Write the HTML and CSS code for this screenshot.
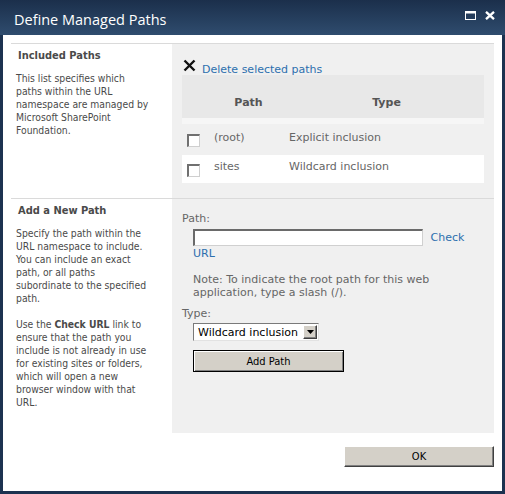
FILE: index.html
```html
<!DOCTYPE html>
<html lang="en">
<head>
<meta charset="utf-8">
<title>Define Managed Paths</title>
<link rel="stylesheet" href="styles.css">
</head>
<body>
<div class="dialog">
  <div class="titlebar">
    <span class="title">Define Managed Paths</span>
    <div class="win-controls">
      <svg class="win-btn" width="11" height="9" viewBox="0 0 11 9" aria-label="Maximize">
        <rect x="0.5" y="0.5" width="10" height="8" fill="none" stroke="#fff"/>
        <rect x="0" y="0" width="11" height="2.5" fill="#fff"/>
      </svg>
      <svg class="win-btn" width="10" height="9" viewBox="0 0 10 9" aria-label="Close">
        <path d="M1 0.8 L9 8.2 M9 0.8 L1 8.2" stroke="#fff" stroke-width="2.3"/>
      </svg>
    </div>
  </div>

  <div class="content">
    <div class="section">
      <div class="desc">
        <h3 class="desc-title">Included Paths</h3>
        <p>This list specifies which paths within the URL namespace are managed by Microsoft SharePoint Foundation.</p>
      </div>
      <div class="control">
        <div class="delete-row">
          <svg class="delete-icon" width="13" height="13" viewBox="0 0 13 13">
            <path d="M1.5 1.5 L11.5 11.5 M11.5 1.5 L1.5 11.5" stroke="#111" stroke-width="2.4"/>
          </svg>
          <a href="#" class="link">Delete selected paths</a>
        </div>
        <table class="paths">
          <colgroup>
            <col class="col-cb">
            <col class="col-path">
            <col class="col-type">
          </colgroup>
          <thead>
            <tr><th></th><th>Path</th><th>Type</th></tr>
          </thead>
          <tbody>
            <tr class="row-odd">
              <td class="cell-cb"><input type="checkbox" class="cb"></td>
              <td>(root)</td>
              <td>Explicit inclusion</td>
            </tr>
            <tr class="row-even">
              <td class="cell-cb"><input type="checkbox" class="cb"></td>
              <td>sites</td>
              <td>Wildcard inclusion</td>
            </tr>
          </tbody>
        </table>
      </div>
    </div>

    <div class="section">
      <div class="desc">
        <h3 class="desc-title">Add a New Path</h3>
        <p>Specify the path within the URL namespace to include. You can include an exact path, or all paths subordinate to the specified path.</p>
        <p class="para">Use the <b>Check URL</b> link to ensure that the path you include is not already in use for existing sites or folders, which will open a new browser window with that URL.</p>
      </div>
      <div class="control control-form">
        <label class="label">Path:</label>
        <div class="field">
          <input type="text" class="text-input"> <a href="#" class="link">Check URL</a>
        </div>
        <p class="note">Note: To indicate the root path for this web application, type a slash (/).</p>
        <label class="label label-type">Type:</label>
        <div class="field">
          <div class="select">
            <span class="select-value">Wildcard inclusion</span>
            <span class="select-arrow">
              <svg width="7" height="4" viewBox="0 0 7 4"><path d="M0 0 H7 L3.5 4 Z" fill="#000"/></svg>
            </span>
          </div>
        </div>
        <div class="field">
          <button type="button" class="btn btn-add">Add Path</button>
        </div>
      </div>
    </div>

    <div class="footer">
      <button type="button" class="btn btn-ok">OK</button>
    </div>
  </div>
</div>
</body>
</html>
```

FILE: styles.css
```css
* {
  box-sizing: border-box;
}

html,
body {
  margin: 0;
  padding: 0;
}

body {
  width: 505px;
  height: 494px;
  overflow: hidden;
  background: #1c3250;
}

/* window frame */
.dialog {
  width: 505px;
  height: 494px;
  padding: 0 3px 3px;
  background: #1c3250;
  display: flex;
  flex-direction: column;
}

.titlebar {
  height: 35px;
  margin: 0 -3px;
  padding: 0 10px 0 14px;
  background: linear-gradient(#1b2f4b, #2f4c6e);
  display: flex;
  align-items: center;
  justify-content: space-between;
  flex: none;
}

.title {
  color: #fff;
  font-family: "Open Sans", "Noto Sans", sans-serif;
  font-size: 14.5px;
  padding-top: 3px;
}

.win-controls {
  align-self: flex-start;
  margin-top: 11px;
  display: flex;
  gap: 9px;
}

.win-btn {
  display: block;
}

/* dialog body */
.content {
  flex: 1;
  background: #fff;
  padding: 8px 8px 0;
  display: flex;
  flex-direction: column;
}

.section {
  display: grid;
  grid-template-columns: 161px 1fr;
  border-top: 1px solid #dadada;
}

.desc {
  padding: 5px 19.5px 24px 5px;
  color: #4a4a4a;
  font-family: "DejaVu Sans Condensed", "DejaVu Sans", sans-serif;
  font-stretch: condensed;
  font-size: 10.3px;
  line-height: 13px;
}

.desc-title {
  margin: 0;
  padding-left: 2px;
  font-size: 11px;
  font-weight: bold;
  line-height: 13px;
}

.desc p {
  margin: 10px 0 0;
}

.desc p.para {
  margin-top: 13px;
}

.desc b {
  font-weight: bold;
}

.control {
  background: #f0f0f0;
  padding: 14px 10px 15px;
  font-family: "DejaVu Sans", Verdana, sans-serif;
  font-size: 11px;
  line-height: 13px;
  color: #666;
}

.link {
  color: #2d6fae;
  text-decoration: none;
}

.delete-row {
  height: 17px;
  display: flex;
  align-items: flex-start;
  gap: 6px;
  padding-left: 1px;
}

.delete-icon {
  display: block;
  margin-top: 1px;
}

.delete-row .link {
  margin-top: 5px;
}

/* path list */
.paths {
  width: 302px;
  table-layout: fixed;
  border-collapse: separate;
  border-spacing: 0;
}

.col-cb {
  width: 26px;
}

.col-path {
  width: 75px;
}

.paths th {
  background: #e8e8e8;
  border-bottom: 6px solid #f6f6f6;
  color: #555;
  font-weight: bold;
  text-align: center;
  padding: 21px 0 9px 6px;
  line-height: 13px;
}

.paths td {
  padding: 7px 0 11px 6px;
  vertical-align: top;
  white-space: nowrap;
}

.paths .row-even td {
  background: #fff;
  padding-top: 5px;
  padding-bottom: 10px;
}

.paths td.cell-cb {
  padding: 0 0 0 5px;
  vertical-align: middle;
}

.cb {
  appearance: none;
  -webkit-appearance: none;
  display: block;
  margin: 2px 0 0;
  width: 13px;
  height: 13px;
  background: #fff;
  border-style: solid;
  border-width: 2px 1px 1px 2px;
  border-color: #707070 #cfcfcf #cfcfcf #707070;
}

/* add form */
.control-form {
  padding-top: 13px;
}

.label {
  display: block;
  color: #666;
}

.field {
  margin-left: 11px;
  margin-right: 12px;
}

.field:first-of-type {
  margin-top: 4px;
  line-height: 15px;
}

.text-input {
  appearance: none;
  -webkit-appearance: none;
  width: 230px;
  height: 17px;
  margin: 0 4px 0 0;
  padding: 0;
  vertical-align: middle;
  background: #fff;
  border-style: solid;
  border-width: 2px 1px 1px 2px;
  border-color: #6a6a6a #d0d0d0 #d0d0d0 #6a6a6a;
}

.note {
  margin: 12px 0 0 11px;
  color: #666;
}

.label-type {
  margin-top: 8px;
}

.label-type + .field {
  margin-top: 3px;
}

.select {
  width: 126px;
  height: 18px;
  display: flex;
  align-items: center;
  justify-content: space-between;
  background: #fff;
  border-style: solid;
  border-width: 1px;
  border-color: #7a7a7a #e2e2e2 #e2e2e2 #7a7a7a;
  padding: 0 1px 0 4px;
}

.select-value {
  color: #000;
  font-family: "DejaVu Sans", sans-serif;
  font-size: 11px;
}

.select-arrow {
  width: 14px;
  height: 14px;
  background: #d4d0c8;
  border-style: solid;
  border-width: 1px;
  border-color: #fff #404040 #404040 #fff;
  box-shadow: inset -1px -1px #808080;
  display: flex;
  align-items: center;
  justify-content: center;
}

.select-arrow svg {
  display: block;
}

.btn {
  font-family: "DejaVu Sans Condensed", "DejaVu Sans", sans-serif;
  font-stretch: condensed;
  font-size: 11px;
  color: #000;
  background: #d4d0c8;
  padding: 0;
  cursor: default;
}

.btn-add {
  display: block;
  margin-top: 9px;
  width: 151px;
  height: 22px;
  border: 1px solid #000;
  box-shadow: inset 1px 1px #fff, inset -1px -1px #808080;
}

.footer {
  display: flex;
  justify-content: flex-end;
  padding-top: 13px;
}

.btn-ok {
  width: 150px;
  height: 21px;
  border-style: solid;
  border-width: 1px;
  border-color: #fff #404040 #404040 #fff;
  box-shadow: inset -1px -1px #808080;
}
```
